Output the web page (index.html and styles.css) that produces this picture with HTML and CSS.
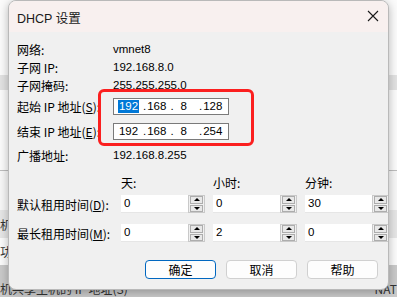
FILE: index.html
```html
<!DOCTYPE html>
<html>
<head>
<meta charset="utf-8">
<link rel="stylesheet" href="styles.css">
</head>
<body>
<div class="backdrop">
  <div class="bd-row bd-white h75"></div>
  <div class="bd-row bd-gray h15"></div>
  <div class="bd-row bd-white h80"></div>
  <div class="bd-row bd-line h40"></div>
  <div class="bd-row bd-gray2 h28"><span class="bd-txt">机</span></div>
  <div class="bd-row bd-white h27"><span class="bd-txt">功</span></div>
  <div class="bd-row bd-shadow h32"><span class="bd-txt">机共享主机的 IP 地址(S)</span><span class="bd-txt right">NAT</span></div>
</div>

<div class="dialog">
  <div class="titlebar">
    <span class="title">DHCP 设置</span>
    <svg class="close" width="12" height="12" viewBox="0 0 12 12"><path d="M1 1 L11 11 M11 1 L1 11" stroke="#1a1a1a" stroke-width="1.1" fill="none"/></svg>
  </div>
  <div class="content">
    <div class="row info"><span class="lbl">网络:</span><span class="val">vmnet8</span></div>
    <div class="row info"><span class="lbl">子网 IP:</span><span class="val">192.168.8.0</span></div>
    <div class="row info"><span class="lbl">子网掩码:</span><span class="val">255.255.255.0</span></div>
    <div class="row ip first">
      <span class="lbl">起始 IP 地址(<u>S</u>):</span>
      <div class="ipbox"><span class="o1 sel">192</span><span class="d1">.</span><span class="o2">168</span><span class="d2">.</span><span class="o3">8</span><span class="d3">.</span><span class="o4">128</span></div>
    </div>
    <div class="row ip second">
      <span class="lbl">结束 IP 地址(<u>E</u>):</span>
      <div class="ipbox"><span class="o1">192</span><span class="d1">.</span><span class="o2">168</span><span class="d2">.</span><span class="o3">8</span><span class="d3">.</span><span class="o4">254</span></div>
    </div>
    <div class="row info bcast"><span class="lbl">广播地址:</span><span class="val">192.168.8.255</span></div>

    <div class="lease heads">
      <span></span><span class="hd">天:</span><span class="hd">小时:</span><span class="hd">分钟:</span>
    </div>
    <div class="lease r1">
      <span class="lbl">默认租用时间(<u>D</u>):</span>
      <div class="spin"><div class="field">0</div><div class="arrows"><span class="ab up"></span><span class="ab down"></span></div></div>
      <div class="spin"><div class="field">0</div><div class="arrows"><span class="ab up"></span><span class="ab down"></span></div></div>
      <div class="spin"><div class="field">30</div><div class="arrows"><span class="ab up"></span><span class="ab down"></span></div></div>
    </div>
    <div class="lease r2">
      <span class="lbl">最长租用时间(<u>M</u>):</span>
      <div class="spin"><div class="field">0</div><div class="arrows"><span class="ab up"></span><span class="ab down"></span></div></div>
      <div class="spin"><div class="field">2</div><div class="arrows"><span class="ab up"></span><span class="ab down"></span></div></div>
      <div class="spin"><div class="field">0</div><div class="arrows"><span class="ab up"></span><span class="ab down"></span></div></div>
    </div>

    <div class="buttons">
      <button class="btn primary">确定</button>
      <button class="btn">取消</button>
      <button class="btn">帮助</button>
    </div>
    <div class="highlight"></div>
  </div>
</div>
</body>
</html>
```

FILE: styles.css
```css
* { box-sizing: border-box; }
html, body { margin: 0; padding: 0; }
body {
  width: 397px;
  height: 297px;
  overflow: hidden;
  position: relative;
  font-family: "Liberation Sans", "Noto Sans CJK SC", sans-serif;
  font-size: 12px;
  color: #000;
  background: #ffffff;
}

/* backdrop window */
.backdrop { display: flex; flex-direction: column; width: 397px; height: 297px; }
.bd-row { display: flex; align-items: center; justify-content: space-between; }
.bd-white { background: #fbfbfb; }
.bd-gray { background: #e2e2e2; }
.bd-gray2 { background: #e6e6e6; }
.bd-line { background: #f7f7f7; border-top: 1px solid #bdbdbd; }
.bd-shadow { background: #c9c9c9; align-items: flex-start; padding-top: 15px; }
.bd-txt { font-family: "Noto Sans CJK SC", sans-serif; font-size: 12px; color: #333; margin-left: 0; }
.bd-txt.right { margin-right: 0; }
.h75 { height: 75px; } .h15 { height: 15px; } .h80 { height: 80px; } .h40 { height: 40px; }
.h28 { height: 28px; } .h27 { height: 27px; } .h32 { height: 32px; }

/* dialog */
.dialog {
  position: absolute;
  left: 8px;
  top: 0;
  width: 381px;
  height: 290px;
  background: #f0f0f0;
  border: 1px solid #b9b9b9;
  border-radius: 8px;
  box-shadow: 0 2px 10px rgba(0,0,0,0.28);
  overflow: hidden;
}
.titlebar {
  height: 31px;
  background: #f8f0ef;
  display: flex;
  align-items: center;
  justify-content: space-between;
  padding: 0 8px 0 8px;
}
.title { font-size: 12.5px; color: #1a1a1a; margin-top: 1px; }
.close { margin-right: 1px; margin-top: -1px; }

.content {
  position: relative;
  padding: 8px 0 0 8px;
  font-family: "Noto Sans CJK SC", sans-serif;
}
.row { display: flex; align-items: center; }
.lbl { width: 96px; flex: none; white-space: nowrap; color: #000; font-size: 12px; }
.val { font-family: "Liberation Sans", sans-serif; font-size: 11.5px; }
.info { height: 18px; }
.ip.first { margin-top: 4px; height: 17px; }
.ip.second { margin-top: 8px; height: 17px; }
.bcast { margin-top: 6px; }

.ipbox {
  width: 116px;
  height: 17px;
  background: #fff;
  border: 1px solid #7a7a7a;
  display: flex;
  align-items: center;
  padding-left: 4px;
  font-family: "Liberation Sans", sans-serif;
  font-size: 11.5px;
  line-height: 13px;
}
.ipbox span { font-family: "Liberation Sans", sans-serif; display: inline-block; }
.o1 { width: 21px; text-align: center; }
.sel { background: #0078d7; color: #fff; }
.d1 { margin-left: 4px; }
.o2 { margin-left: 1px; }
.d2 { margin-left: 4px; }
.o3 { margin-left: 7px; }
.d3 { margin-left: 12px; }
.o4 { margin-left: 1px; }

.lease {
  display: grid;
  grid-template-columns: 96px 84px 84px 84px;
  column-gap: 8px;
  align-items: center;
}
.heads { margin-top: 9px; height: 18px; }
.hd { font-size: 12px; }
.r1 { margin-top: 4px; height: 18px; }
.r2 { margin-top: 11px; height: 18px; }
.spin { display: flex; height: 18px; }
.field {
  width: 67px;
  height: 18px;
  background: #fff;
  border-bottom: 1px solid #e6e6e6;
  font-family: "Liberation Sans", sans-serif;
  font-size: 11.5px;
  padding: 2px 0 0 3px;
}
.arrows {
  width: 17px;
  height: 18px;
  display: flex;
  flex-direction: column;
  gap: 1px;
  border: 1px solid #c9c9c9;
  background: #f0f0f0;
  padding: 0 1px;
}
.ab {
  flex: 1;
  border: 1px solid #adadad;
  background: #e8e8e8;
  display: flex;
  align-items: center;
  justify-content: center;
}
.ab::after {
  content: "";
  width: 0; height: 0;
  border-left: 3px solid transparent;
  border-right: 3px solid transparent;
}
.ab.up::after { border-bottom: 3px solid #000; }
.ab.down::after { border-top: 3px solid #000; }

.buttons {
  display: flex;
  justify-content: flex-end;
  gap: 10px;
  margin-top: 18px;
  padding-right: 10px;
}
.btn {
  width: 71px;
  height: 19px;
  background: #fdfdfd;
  border: 1px solid #d0d0d0;
  border-radius: 4px;
  font-family: "Noto Sans CJK SC", sans-serif;
  font-size: 12px;
  color: #000;
  padding: 0;
  line-height: 16px;
}
.btn.primary { border: 1.5px solid #0067c0; }

.highlight {
  position: absolute;
  left: 89px;
  top: 57px;
  width: 156px;
  height: 57px;
  border: 3px solid #fb1f1f;
  border-radius: 6px;
  pointer-events: none;
}
```
